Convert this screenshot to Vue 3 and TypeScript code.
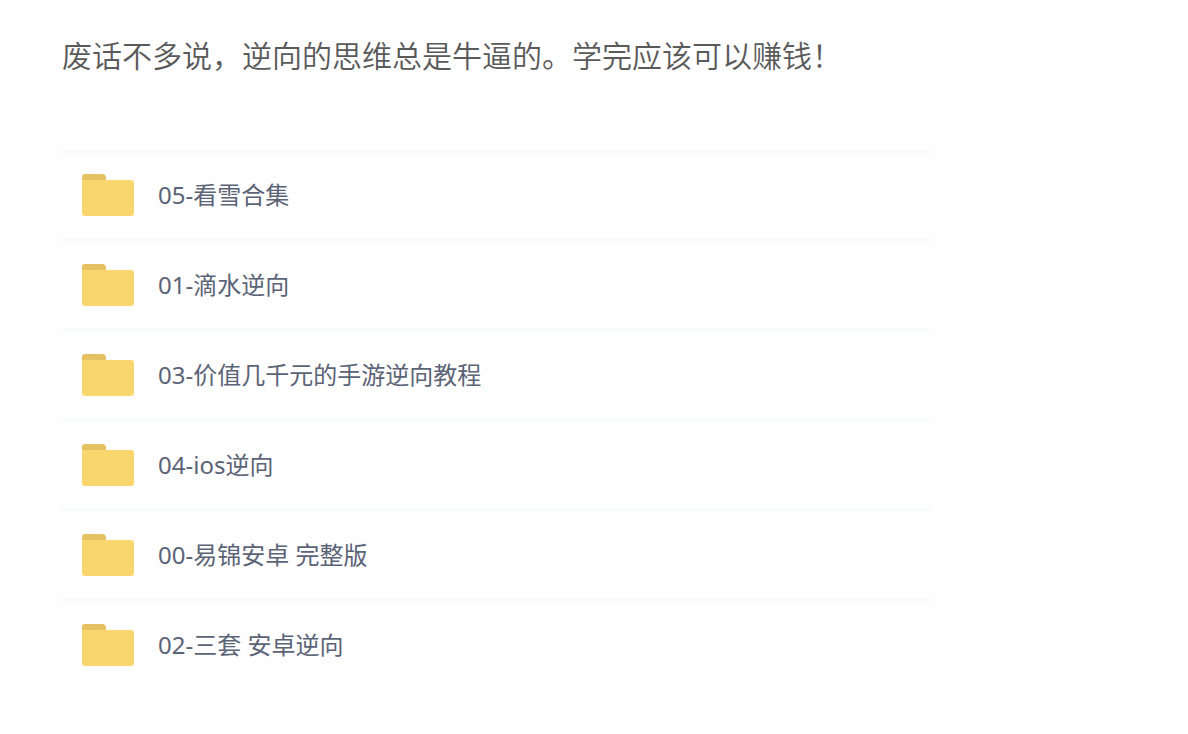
<script setup lang="ts">
const intro: string = '废话不多说，逆向的思维总是牛逼的。学完应该可以赚钱！'

const folders: string[] = [
  '05-看雪合集',
  '01-滴水逆向',
  '03-价值几千元的手游逆向教程',
  '04-ios逆向',
  '00-易锦安卓 完整版',
  '02-三套 安卓逆向',
]
</script>

<template>
  <main class="article">
    <p class="intro">{{ intro }}</p>
    <ul class="folders">
      <li v-for="name in folders" :key="name" class="folder">
        <svg class="icon" viewBox="0 0 52 42" aria-hidden="true">
          <path d="M0 10V3Q0 0 3 0H20Q24 0 24 4V10Z" fill="#e6c161" />
          <path d="M0 6H49Q52 6 52 9V39Q52 42 49 42H3Q0 42 0 39Z" fill="#f9d66e" />
        </svg>
        <span class="name">{{ name }}</span>
      </li>
    </ul>
  </main>
</template>

<style>
body {
  margin: 0;
  background: #fefefe;
}
</style>

<style scoped>
.article {
  padding: 30px 62px 0;
}

.intro {
  margin: 0;
  font-family: "Noto Sans CJK SC", sans-serif;
  font-size: 30px;
  font-weight: 350;
  line-height: 48px;
  color: #5a5a5a;
}

.folders {
  max-width: 868px;
  margin: 72px 0 0;
  padding: 0;
  list-style: none;
}

.folder {
  display: flex;
  align-items: center;
  gap: 24px;
  padding: 23px 20px 22px;
  border-top: 3px solid #f8f9fd;
}

.folder:first-child {
  padding-top: 21px;
}

.icon {
  flex: none;
  width: 52px;
  height: 42px;
}

.name {
  font-family: "Noto Sans", "Noto Sans CJK SC", sans-serif;
  font-size: 24px;
  line-height: 42px;
  color: #5b6376;
}
</style>
